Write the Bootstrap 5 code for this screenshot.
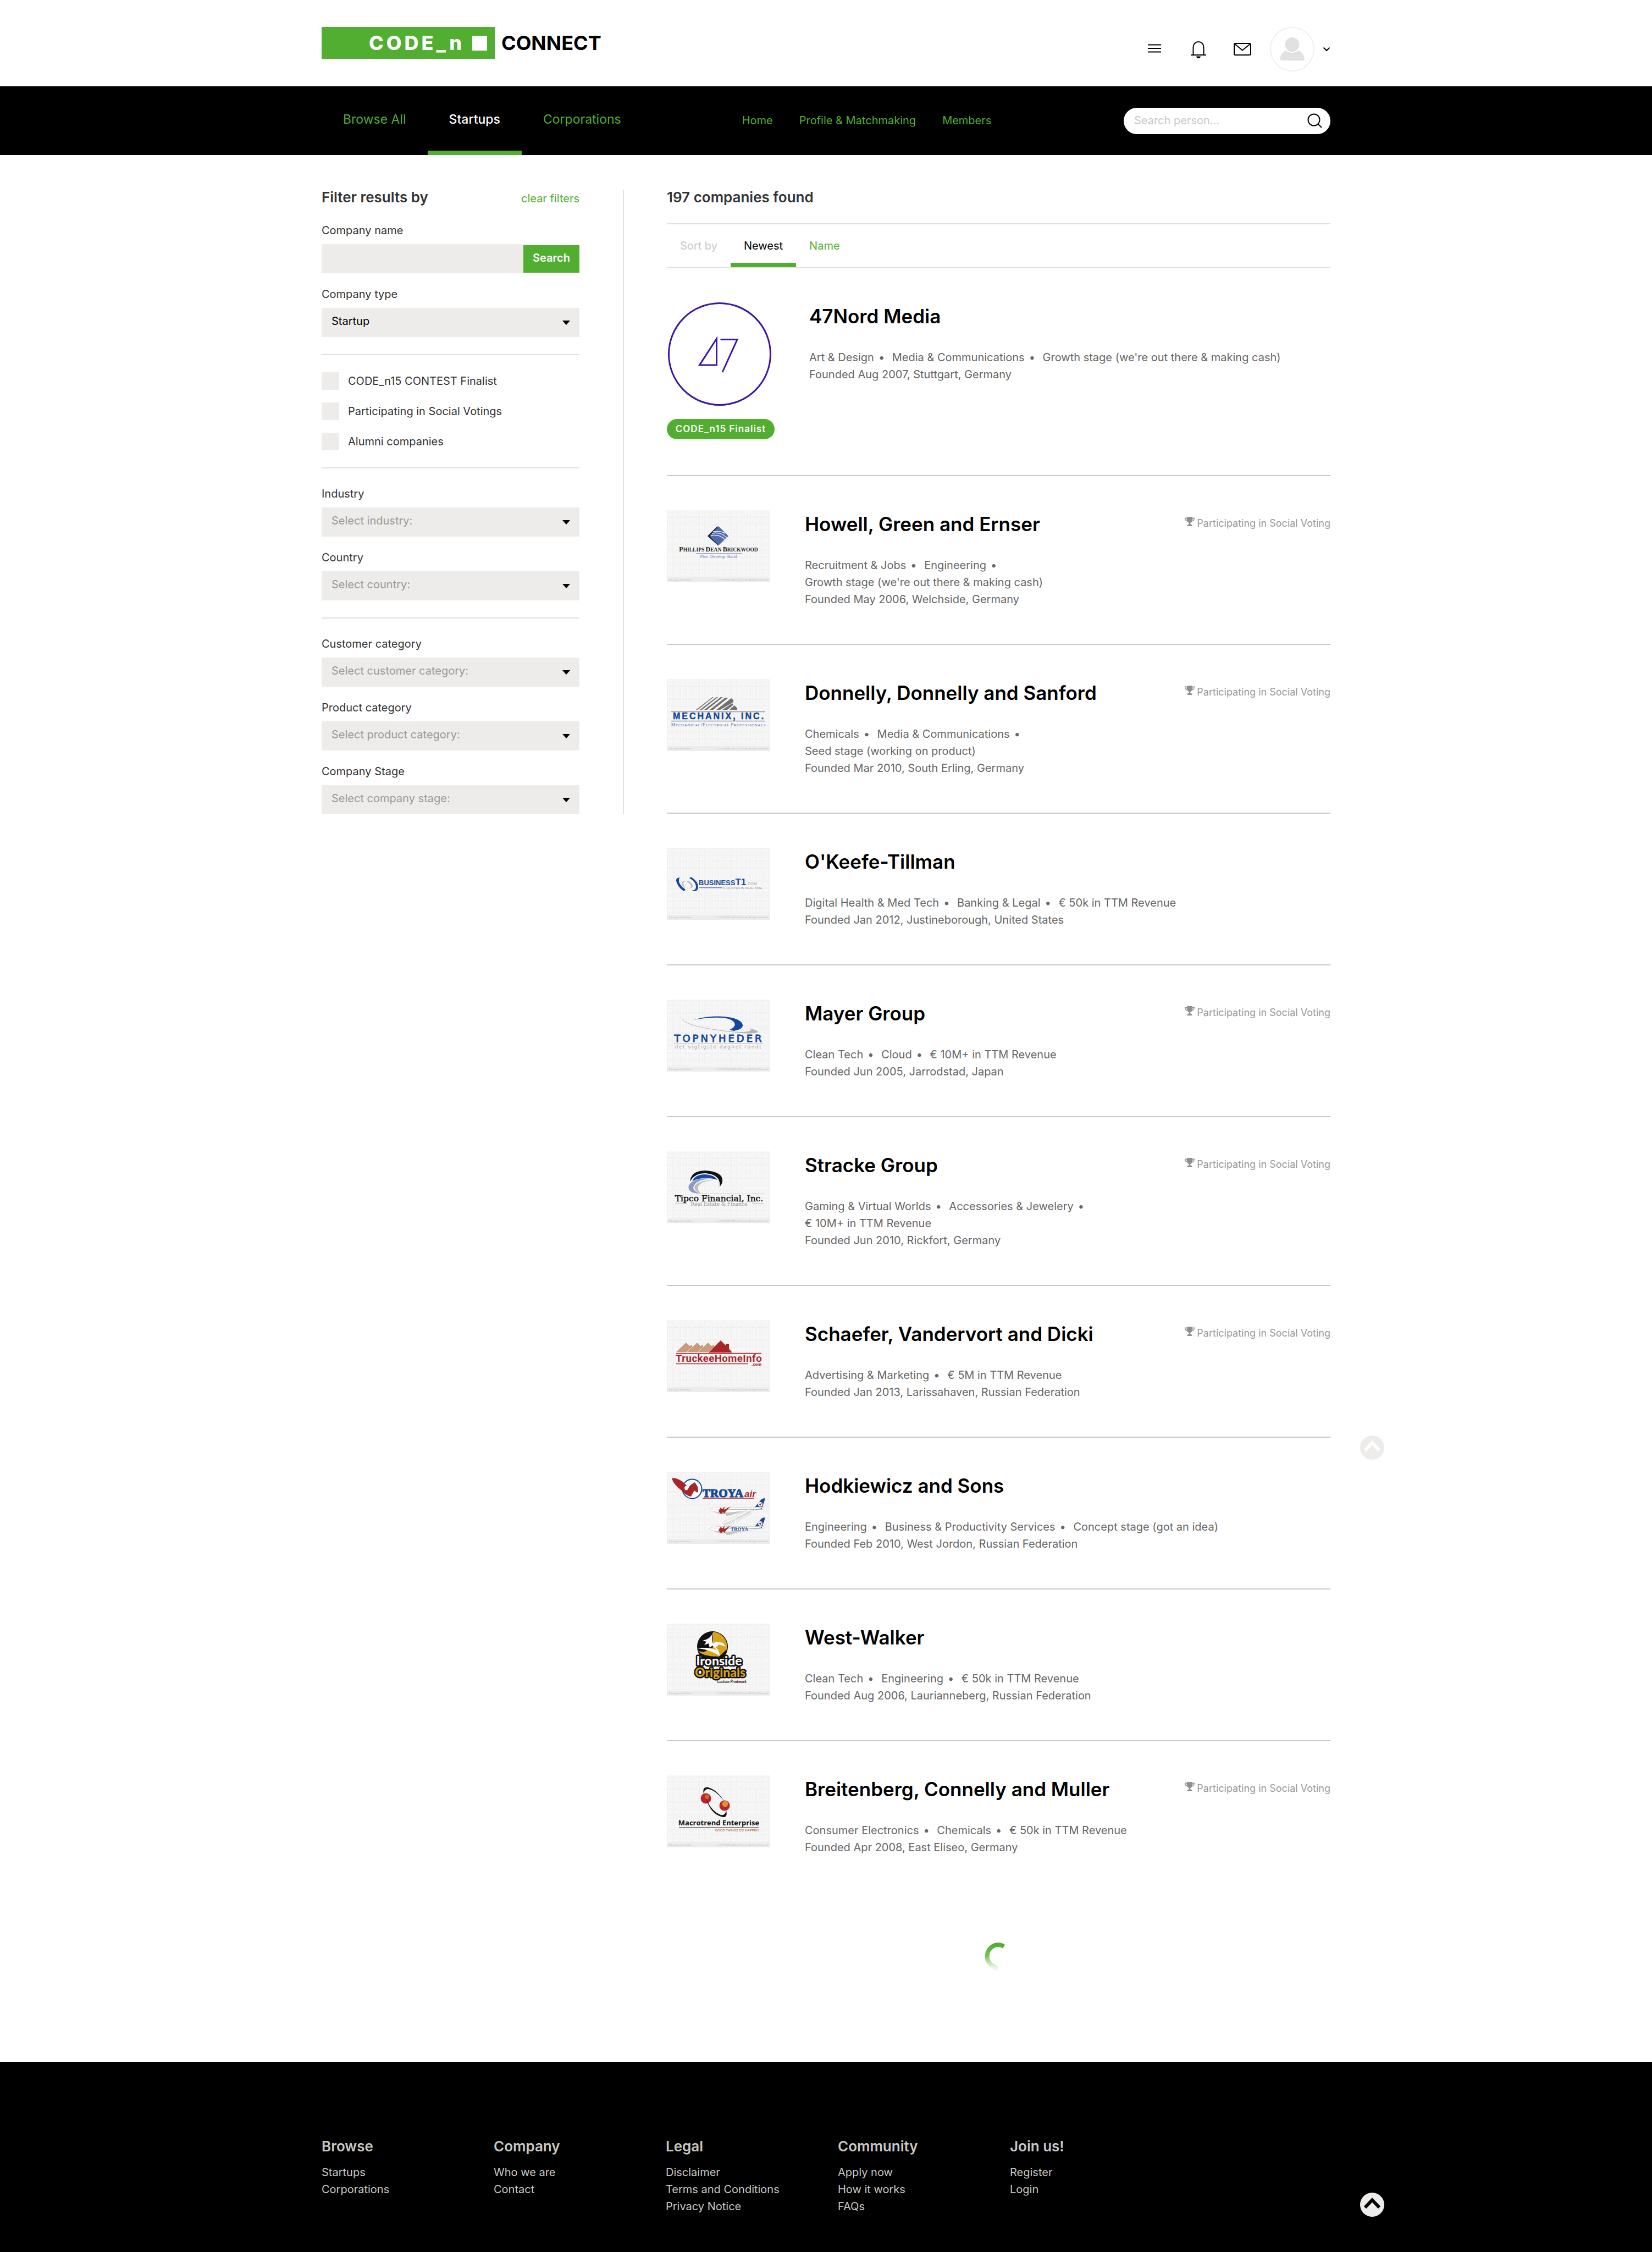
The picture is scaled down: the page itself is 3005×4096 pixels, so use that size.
<!DOCTYPE html>
<html lang="en">
<head>
<meta charset="utf-8">
<meta name="viewport" content="width=device-width, initial-scale=1">
<title>CODE_n CONNECT – Startups</title>
<link rel="stylesheet" href="https://cdn.jsdelivr.net/npm/bootstrap@5.3.0/dist/css/bootstrap.min.css">
<style>
:root{--brand:#52ae30;--ink:#333;--soft:#666;--field:#edecea;--rule:#e1e1e1}
body{font-family:Inter,"Liberation Sans",sans-serif;font-size:20px;line-height:31px;color:var(--ink);background:#fff}
a{color:var(--brand);text-decoration:none}
a:hover{text-decoration:underline}
.wrap{width:100%;max-width:1835px;margin-inline:auto}

/* header */
.topbar{padding:49px 0 27px}
.brand{gap:12px;color:#000;font-size:36px;font-weight:700;line-height:36px}
.brand:hover{text-decoration:none}
.brand-box{width:315px;height:58px;padding-right:14px;gap:14px;background:var(--brand);color:#fff}
.brand-code{font-weight:800;letter-spacing:5px}
.brand-square{width:27px;height:27px;background:#fff}
.tools{gap:48px}
.tools button,.user-menu{border:0;padding:0;background:none;line-height:0}
.user-menu{gap:15px;margin-left:-14px}

/* navigation */
.mainnav{height:125px;background:#000}
.mainnav .browse a{padding:4px 39px 0;font-size:23px;border-bottom:8px solid transparent}
.mainnav .browse a[aria-current]{color:#fff;border-color:var(--brand);font-weight:500}
.mainnav .site{gap:48px;margin-left:181px}
.people-search{width:376px;height:48px;padding:0 15px 0 19px;border-radius:24px;background:#fff}
.people-search input{border:0;outline:0;width:100%;min-width:0;padding:0;background:none}
.people-search input::placeholder{color:#c9c7c3}
.people-search button{border:0;padding:0;background:none;line-height:0}

/* filters */
.page-body{padding:63px 0 165px;gap:78px}
.filters{flex:0 0 550px;padding-right:79px;border-right:2px solid var(--rule)}
.filters-head{height:28px;margin-bottom:31px}
.filters-head a{line-height:28px}
.section-title{margin:0;font-size:26px;line-height:28px;font-weight:600}
.field-group{gap:23px}
.filters label{display:block}
.field-group label{margin-bottom:9px}
.filters .form-control,.filters .form-select{height:53px;border:0;border-radius:0;background-color:var(--field);font-size:20px}
.filters .form-select{padding:0 48px 5px 18px;color:#999;background-image:url("data:image/svg+xml,%3Csvg xmlns='http://www.w3.org/2000/svg' viewBox='0 0 14 8'%3E%3Cpath d='M0 0h14L7 8z'/%3E%3C/svg%3E");background-size:14px 8px;background-position:right 17px center}
.filters .form-select.chosen{color:#000}
.btn-search{width:102px;height:50px;padding:0 0 3px;border:0;background:var(--brand);color:#fff;font-size:20px;font-weight:600}
.filters hr{margin:31px 0;border:0;border-top:2px solid var(--rule);opacity:1}
.ticks{gap:23px}
.ticks input{appearance:none;width:32px;height:32px;margin:0;background:var(--field)}
.ticks input:checked{background:var(--brand)}

/* results */
.sortbar{height:82px;margin-top:33px;border:solid var(--rule);border-width:2px 0}
.sortbar>*{padding:0 24px;border-bottom:8px solid transparent;border-top:8px solid transparent}
.sortbar .hint{color:#c9c7c3}
.sortbar [aria-current]{color:#000;border-bottom-color:var(--brand)}
.company{gap:63px;padding:62px 0 65px;border-bottom:2px solid #c9c9c9}
.company:last-child{border-bottom:0}
.thumb{flex:none;width:188px}
.thumb svg{display:block;width:100%}
.finalist-logo{flex:none;width:196px}
.finalist-tag{margin-top:24px;height:37px;border-radius:19px;background:var(--brand);color:#fff;font-size:17px;font-weight:600;letter-spacing:1px;line-height:37px}
.company h2{margin:0 0 35px;font-size:35px;line-height:50px;font-weight:600}
.company h2 a{color:#000}
.facts{color:var(--soft)}
.facts span{white-space:nowrap}
.facts span:not(:last-child)::after{content:"•";margin:0 8px}
.voting{flex:none;padding-top:8px;gap:4px;font-size:18px;color:#999}
.loader{display:block;margin:92px auto 0}
.to-top{position:absolute;right:-98px;line-height:0}
.to-top.upper{bottom:1095px}

/* footer */
.site-footer{padding:134px 0 68px;background:#000;color:#c9c7c3}
.site-footer a{color:#c9c7c3}
.site-footer h3{margin:0 0 12px;font-size:26px;line-height:40px;font-weight:600}
.site-footer nav{flex:0 0 313px}
.site-footer .to-top{bottom:-3px}
@media (max-width:1400px){
  .wrap{padding-inline:24px}
  .page-body,.mainnav>.wrap,.site-footer .wrap{flex-wrap:wrap}
  .mainnav{height:auto}.filters{flex-basis:100%;border:0;padding:0}.to-top{right:24px}
}
</style>
</head>
<body class="d-flex flex-column min-vh-100">

<!-- shared drawings -->
<svg width="0" height="0" class="position-absolute" aria-hidden="true">
  <defs>
    <pattern id="tiles" width="11.6" height="12.1" patternUnits="userSpaceOnUse">
      <rect width="11.6" height="12.1" fill="#f7f7f7"/>
      <rect x="1.5" y="1.5" width="9" height="9.5" fill="#fafafa" stroke="#eeeeee"/>
      <path d="M4 4h4v2H4.500v2.500H8" fill="none" stroke="#f0f0f0"/>
    </pattern>
    <symbol id="sheet" viewBox="0 0 188 131">
      <rect width="188" height="131" fill="url(#tiles)"/>
      <rect y="122" width="188" height="9" fill="#ececec"/>
      <g font-family="Liberation Sans, sans-serif" font-size="4" fill="#bdbdbd">
        <text x="4" y="128">Biz-Logo.com Portfolio</text>
        <text x="185" y="128" text-anchor="end">© COPYRIGHT, BIZ-LOGO.com. All Rights Reserved.</text>
      </g>
    </symbol>
    <symbol id="cup" viewBox="0 0 18 17">
      <path d="M4.500 0h9v1.500H18c0 4-1.500 6.500-5 7.200-.8 1.200-1.800 1.900-2.800 2.200v2.600c1.800.2 3 1 3.300 2V17h-9v-1.500c.3-1 1.500-1.800 3.300-2v-2.600C6.800 10.600 5.800 9.900 5 8.700 1.500 8 0 5.500 0 1.500h4.500zM1.500 3c.2 2 1 3.500 2.700 4.100C3.700 6 3.500 4.500 3.500 3zm15 0h-2c0 1.500-.2 3-.7 4.100C15.500 6.500 16.300 5 16.500 3z" fill="#8f8f8f" fill-rule="evenodd"/>
    </symbol>
    <symbol id="plane" viewBox="0 0 104 32">
      <path d="M80 20 95 2q3-2 7-2l-6 19z" fill="#15489a"/>
      <circle cx="93" cy="11" r="4" fill="#fff"/><path d="m90 10 3 4 3-6-3 2z" fill="#a8252a"/>
      <path d="M1 20q8-4 22-3.500H80l20-.5-14 5q-14 4-36 5-30 2-44-2-6-1-5-4z" fill="#fff" stroke="#ccc" stroke-width=".8"/>
      <path d="M6 24q30 4 60-1l-20 6H20z" fill="#c8c8c8"/>
      <path d="M0 20.500h100l-16-1z" fill="#777"/>
      <path d="m17 23 4-6 3 3 4-5-1 6 12-6-9 9-2 4-3-3-3 4-3-3z" fill="#a8252a"/>
      <path d="m30 28 28-5-18 8-9 1z" fill="#c4c4c4"/>
    </symbol>
  </defs>
</svg>

<header class="topbar">
  <div class="wrap d-flex justify-content-between align-items-start">
    <a href="#" class="brand d-flex align-items-center">
      <span class="brand-box d-flex align-items-center justify-content-end">
        <span class="brand-code">CODE_n</span><span class="brand-square"></span>
      </span>
      <span>CONNECT</span>
    </a>
    <div class="tools d-flex align-items-center">
      <button type="button" aria-label="Menu"><svg width="32" height="32" viewBox="0 0 32 32" stroke="#000" stroke-width="2"><path d="M4 7.500h24M4 14h24M4 20.500h24"/></svg></button>
      <button type="button" aria-label="Notifications"><svg width="32" height="32" viewBox="0 0 32 32" fill="none" stroke="#000" stroke-width="2"><path d="M6.500 25V11.500a9.500 9.500 0 0 1 19 0V25M2 26h28"/><path d="M12 28.500h8q-1 4-4 4t-4-4z" fill="#000" stroke="none"/></svg></button>
      <button type="button" aria-label="Messages"><svg width="32" height="32" viewBox="0 0 32 32" fill="none" stroke="#000" stroke-width="2"><rect x="1" y="5" width="30" height="21" rx="2"/><path d="m2 6 14 11.500L30 6"/></svg></button>
      <button type="button" class="user-menu d-flex align-items-center" aria-label="Account">
        <svg width="81" height="81" viewBox="0 0 81 81"><circle cx="40.500" cy="40.500" r="39.500" fill="#fff" stroke="#efefef" stroke-width="2"/><ellipse cx="40.500" cy="32" rx="13" ry="13" fill="#e1e1e1"/><path d="M18 61q0-13 11-18 11 8 23 0 11 5 11 18z" fill="#e1e1e1"/></svg>
        <svg width="14" height="9" viewBox="0 0 14 9" fill="none" stroke="#000" stroke-width="2"><path d="m1.500 1.500 5.500 5.500 5.500-5.500"/></svg>
      </button>
    </div>
  </div>
</header>

<div class="mainnav">
  <div class="wrap d-flex h-100">
    <nav class="browse d-flex" aria-label="Browse">
      <a href="#" class="d-flex align-items-center">Browse All</a>
      <a href="#" class="d-flex align-items-center" aria-current="page">Startups</a>
      <a href="#" class="d-flex align-items-center">Corporations</a>
    </nav>
    <nav class="site d-flex align-items-center" aria-label="Site">
      <a href="#">Home</a><a href="#">Profile &amp; Matchmaking</a><a href="#">Members</a>
    </nav>
    <form class="people-search d-flex align-items-center ms-auto align-self-center">
      <input type="search" aria-label="Search person" placeholder="Search person...">
      <button type="button" aria-label="Search"><svg width="27" height="27" viewBox="0 0 27 27" fill="none" stroke="#000" stroke-width="2"><circle cx="12" cy="12" r="10.500"/><path d="m19.500 19.500 6.500 6.500"/></svg></button>
    </form>
  </div>
</div>

<main class="wrap page-body d-flex align-items-start position-relative">
  <form class="filters">
    <div class="filters-head d-flex justify-content-between align-items-baseline">
      <h1 class="section-title">Filter results by</h1>
      <a href="#">clear filters</a>
    </div>
    <div class="field-group d-flex flex-column">
      <div>
        <label for="cname">Company name</label>
        <div class="d-flex align-items-center">
          <input id="cname" type="text" class="form-control">
          <button type="button" class="btn-search flex-shrink-0">Search</button>
        </div>
      </div>
      <div>
        <label for="ctype">Company type</label>
        <select id="ctype" class="form-select chosen"><option>Startup</option></select>
      </div>
    </div>
    <hr>
    <div class="ticks d-flex flex-column">
      <div class="d-flex align-items-center gap-3"><input id="t1" type="checkbox"><label for="t1">CODE_n15 CONTEST Finalist</label></div>
      <div class="d-flex align-items-center gap-3"><input id="t2" type="checkbox"><label for="t2">Participating in Social Votings</label></div>
      <div class="d-flex align-items-center gap-3"><input id="t3" type="checkbox"><label for="t3">Alumni companies</label></div>
    </div>
    <hr>
    <div class="field-group d-flex flex-column">
      <div><label for="industry">Industry</label><select id="industry" class="form-select"><option>Select industry:</option></select></div>
      <div><label for="country">Country</label><select id="country" class="form-select"><option>Select country:</option></select></div>
    </div>
    <hr>
    <div class="field-group d-flex flex-column">
      <div><label for="customer">Customer category</label><select id="customer" class="form-select"><option>Select customer category:</option></select></div>
      <div><label for="product">Product category</label><select id="product" class="form-select"><option>Select product category:</option></select></div>
      <div><label for="stage">Company Stage</label><select id="stage" class="form-select"><option>Select company stage:</option></select></div>
    </div>
  </form>

  <section class="flex-grow-1">
    <h2 class="section-title">197 companies found</h2>
    <div class="sortbar d-flex">
      <span class="hint d-flex align-items-center">Sort by</span>
      <a href="#" class="d-flex align-items-center" aria-current="true">Newest</a>
      <a href="#" class="d-flex align-items-center">Name</a>
    </div>

    <div class="results">
      <article class="company d-flex">
        <div class="finalist-logo">
          <svg class="d-block" width="191" height="188" viewBox="0 0 191 188" fill="none" stroke="#3d15a3" stroke-width="3"><circle cx="96" cy="94" r="92.500"/><path d="M90.500 66v48H59.500zM97.500 67.500H128L101 127"/></svg>
          <div class="finalist-tag text-center">CODE_n15 Finalist</div>
        </div>
        <div>
          <h2><a href="#">47Nord Media</a></h2>
          <div class="facts"><span>Art &amp; Design</span> <span>Media &amp; Communications</span> <span>Growth stage (we're out there &amp; making cash)</span></div>
          <div class="facts">Founded Aug 2007, Stuttgart, Germany</div>
        </div>
      </article>

      <article class="company d-flex">
        <div class="thumb"><svg viewBox="0 0 188 131" role="img" aria-label="Phillips Dean Brickwood">
          <use href="#sheet"/>
          <path d="M92 29 74 47l19 17z" fill="#111"/><path d="m94 29 18 18-18 17-17-17z" fill="#5069ac"/>
          <path d="M82 42q16-3 27 8M80 46q16-3 26 8M84 39q14-2 22 3" fill="none" stroke="#dfe5f4" stroke-width="1.500"/>
          <g font-family="Liberation Serif, serif" text-anchor="middle"><text x="94" y="75" font-size="12" font-weight="700" fill="#222"><tspan>P</tspan><tspan font-size="9.500">HILLIPS </tspan><tspan>D</tspan><tspan font-size="9.500">EAN </tspan><tspan>B</tspan><tspan font-size="9.500">RICKWOOD</tspan></text>
          <text x="94" y="87" font-size="8" fill="#6c80bd">Plan&#160; Develop&#160; Build</text></g>
          <path d="M53 79h84" stroke="#8c9ccc" stroke-width="1.500"/>
        </svg></div>
        <div class="flex-grow-1">
          <h2><a href="#">Howell, Green and Ernser</a></h2>
          <div class="facts"><span>Recruitment &amp; Jobs</span> <span>Engineering</span> <span>Growth stage (we're out there &amp; making cash)</span></div>
          <div class="facts">Founded May 2006, Welchside, Germany</div>
        </div>
        <div class="voting d-flex"><svg class="mt-1" width="18" height="17"><use href="#cup"/></svg><span>Participating in Social Voting</span></div>
      </article>

      <article class="company d-flex">
        <div class="thumb"><svg viewBox="0 0 188 131" role="img" aria-label="Mechanix, Inc.">
          <use href="#sheet"/>
          <g fill="#707070"><path d="M53 56 83 33h2L56 56zM60 56 90 33h3L64 56zM68 56 98 33h4L73 56zM78 56l28-22h6L84 56zM90 56l27-21 4 3v4L97 56zM101 56l18-12 2 3-11 9zM114 56l9-8 5 5v3z"/></g>
          <path d="M8 59.500h171M8 76.500h171" stroke="#999" stroke-width="1.500"/>
          <text x="95" y="73" text-anchor="middle" font-family="Liberation Sans, sans-serif" font-size="16" font-weight="700" letter-spacing="3" fill="#15489a" stroke="#15489a" stroke-width=".5">MECHANIX, INC.</text>
          <text x="94" y="86" text-anchor="middle" font-family="Liberation Serif, serif" font-size="8.500" letter-spacing=".6" fill="#5069ac">M<tspan font-size="7">ECHANICAL</tspan>/E<tspan font-size="7">LECTRICAL </tspan>P<tspan font-size="7">ROFESSIONALS</tspan></text>
        </svg></div>
        <div class="flex-grow-1">
          <h2><a href="#">Donnelly, Donnelly and Sanford</a></h2>
          <div class="facts"><span>Chemicals</span> <span>Media &amp; Communications</span> <span>Seed stage (working on product)</span></div>
          <div class="facts">Founded Mar 2010, South Erling, Germany</div>
        </div>
        <div class="voting d-flex"><svg class="mt-1" width="18" height="17"><use href="#cup"/></svg><span>Participating in Social Voting</span></div>
      </article>

      <article class="company d-flex">
        <div class="thumb"><svg viewBox="0 0 188 131" role="img" aria-label="BusinessT1.com">
          <use href="#sheet"/>
          <path d="M25 54q-9 0-8 6 2 11 14 19l3-3q-13-9-12-18 0-3 3-4zM41 55q12 7 12 16 0 6-8 7 12 3 12-7 0-10-13-18z" fill="#15489a"/>
          <path d="M34 60q-7 0-7 5 1 6 8 9-5-5-5-9t4-5zM36 61q8 5 8 9 0 3-4 4 7 0 7-4 0-5-8-10z" fill="#bbb"/>
          <g font-family="Liberation Sans, sans-serif"><text x="58" y="68" font-size="13" font-weight="700" fill="#15489a">BUSINESS<tspan font-size="17">T1</tspan><tspan font-size="7" font-weight="400" fill="#999" dx="1">.COM</tspan></text>
          <text x="173" y="75" text-anchor="end" font-size="5.800" fill="#999">T1 QUOTES IN REAL-TIME</text></g>
          <path d="M59 72.500h41" stroke="#6482b8" stroke-width="1.500"/>
        </svg></div>
        <div class="flex-grow-1">
          <h2><a href="#">O'Keefe-Tillman</a></h2>
          <div class="facts"><span>Digital Health &amp; Med Tech</span> <span>Banking &amp; Legal</span> <span>€ 50k in TTM Revenue</span></div>
          <div class="facts">Founded Jan 2012, Justineborough, United States</div>
        </div>
      </article>

      <article class="company d-flex">
        <div class="thumb"><svg viewBox="0 0 188 131" role="img" aria-label="Topnyheder">
          <use href="#sheet"/>
          <path d="M48 37q28-8 56-6 31 3 34 15 1 8-16 11l-8-2q14-6 8-14-12-14-74-4z" fill="#15489a"/>
          <path d="M26 34q12 16 92 24 32 3 35-3-2-2-3-3 15 4 16 6-2 6-40 2Q34 51 26 34z" fill="#b5b5b5"/>
          <text x="95" y="77" text-anchor="middle" font-family="DejaVu Sans, sans-serif" font-size="18" letter-spacing="4" fill="#15489a" stroke="#15489a" stroke-width=".9">TOPNYHEDER</text>
          <path d="M13 80h162" stroke="#bbb"/>
          <text x="94" y="88.500" text-anchor="middle" font-family="DejaVu Sans, sans-serif" font-size="8.500" letter-spacing="1.800" fill="#a5a5a5">det vigtigste døgnet rundt</text>
        </svg></div>
        <div class="flex-grow-1">
          <h2><a href="#">Mayer Group</a></h2>
          <div class="facts"><span>Clean Tech</span> <span>Cloud</span> <span>€ 10M+ in TTM Revenue</span></div>
          <div class="facts">Founded Jun 2005, Jarrodstad, Japan</div>
        </div>
        <div class="voting d-flex"><svg class="mt-1" width="18" height="17"><use href="#cup"/></svg><span>Participating in Social Voting</span></div>
      </article>

      <article class="company d-flex">
        <div class="thumb"><svg viewBox="0 0 188 131" role="img" aria-label="Tipco Financial, Inc.">
          <use href="#sheet"/>
          <path d="M42 55q2-20 28-20 33 2 31 20-1 6-5 9 3-21-25-24-20-1-29 15z" fill="#111"/>
          <path d="M46 54q6-12 23-12 18 1 23 10-24-8-46 2z" fill="#15489a"/>
          <path d="M80 50Q50 46 40 62q-4 14 20 15-18-7-9-17 10-12 37-9z" fill="#8a9bcb"/>
          <path d="M84 53Q58 52 50 64q0 9 12 13-10-9-3-16 7-7 25-8z" fill="#bcbcbc"/>
          <path d="M60 77.500h117M15 95h22M155 95h22" stroke="#bbb"/>
          <g font-family="DejaVu Serif, serif" text-anchor="middle"><text x="95" y="91" font-size="15.500" fill="#111" stroke="#111" stroke-width=".5">Tipco Financial, Inc.</text>
          <text x="95" y="99" font-size="9" fill="#999">Real Estate &amp; Finance</text></g>
        </svg></div>
        <div class="flex-grow-1">
          <h2><a href="#">Stracke Group</a></h2>
          <div class="facts"><span>Gaming &amp; Virtual Worlds</span> <span>Accessories &amp; Jewelery</span> <span>€ 10M+ in TTM Revenue</span></div>
          <div class="facts">Founded Jun 2010, Rickfort, Germany</div>
        </div>
        <div class="voting d-flex"><svg class="mt-1" width="18" height="17"><use href="#cup"/></svg><span>Participating in Social Voting</span></div>
      </article>

      <article class="company d-flex">
        <div class="thumb"><svg viewBox="0 0 188 131" role="img" aria-label="TruckeeHomeInfo.com">
          <use href="#sheet"/>
          <path d="m17 58 18-17 6 6 5-2v4L36 58zM37 58l18-17 6 6 5-2v4L56 58zM57 58l18-17 6 6 5-2v4L76 58z" fill="#c99a7b"/>
          <path d="m76 59 22-22 9 9v-3h6v9l6 7z" fill="#a8252a"/>
          <path d="M17 60.500h155M17 79.500h131" stroke="#a8252a" stroke-width="1.500"/>
          <g font-family="Roboto, sans-serif" font-weight="700" fill="#a8252a"><text x="94.500" y="76" text-anchor="middle" font-size="18.500" letter-spacing=".5">TruckeeHomeInfo</text><text x="172" y="83" text-anchor="end" font-size="8">.com</text></g>
        </svg></div>
        <div class="flex-grow-1">
          <h2><a href="#">Schaefer, Vandervort and Dicki</a></h2>
          <div class="facts"><span>Advertising &amp; Marketing</span> <span>€ 5M in TTM Revenue</span></div>
          <div class="facts">Founded Jan 2013, Larissahaven, Russian Federation</div>
        </div>
        <div class="voting d-flex"><svg class="mt-1" width="18" height="17"><use href="#cup"/></svg><span>Participating in Social Voting</span></div>
      </article>

      <article class="company d-flex">
        <div class="thumb"><svg viewBox="0 0 188 131" role="img" aria-label="Troya air">
          <use href="#sheet"/>
          <circle cx="46" cy="31" r="17.500" fill="#fff" stroke="#15489a" stroke-width="2"/>
          <path d="M9 12q6-3 20 6l7 7q-6 2-3 8 4 2 6-3 3-6 7-8l5-3 5 8 1 8-2 3-5-4-4 7-2 4q-8-1-16-10Q12 23 9 12z" fill="#a8252a"/>
          <text x="65" y="46" font-family="Liberation Serif, serif" font-size="21" font-weight="700" fill="#15489a" stroke="#15489a" stroke-width="1.200">TROYA</text>
          <path d="M65 48h94" stroke="#a8252a" stroke-width="1.500"/>
          <text x="141" y="46" font-family="Liberation Sans, sans-serif" font-size="17" font-style="italic" font-weight="700" fill="#a8252a">air</text>
          <use href="#plane" x="77" y="48" width="104" height="32"/><use href="#plane" x="77" y="83" width="104" height="32"/>
          <text x="116" y="107" font-family="Liberation Serif, serif" font-size="9" font-weight="700" fill="#15489a">TROYA</text>
          <g transform="rotate(-27 128 84)"><rect x="101" y="79" width="54" height="10" fill="#f4f4f4" fill-opacity=".6" stroke="#ccc" stroke-width=".6"/><text x="128" y="86.500" text-anchor="middle" font-family="Liberation Sans, sans-serif" font-size="6" fill="#aaa">Click to zoom more</text></g>
        </svg></div>
        <div class="flex-grow-1">
          <h2><a href="#">Hodkiewicz and Sons</a></h2>
          <div class="facts"><span>Engineering</span> <span>Business &amp; Productivity Services</span> <span>Concept stage (got an idea)</span></div>
          <div class="facts">Founded Feb 2010, West Jordon, Russian Federation</div>
        </div>
      </article>

      <article class="company d-flex">
        <div class="thumb"><svg viewBox="0 0 188 131" role="img" aria-label="Ironside Originals">
          <use href="#sheet"/>
          <circle cx="83" cy="42" r="28" fill="#111"/><path d="M84 15a27 27 0 0 1 25 32l-14 13q-30 0-38-10l10 2 17-9z" fill="#d9a21b"/>
          <path d="M84 16q-4 12-19 15l7 2-4 6 8-3 2 8 5-4 9 9q-16-7-36-4 22 2 40 14 0-10-7-16l6-5 12 4-5-7-14-2-4 4q-3-10 0-21z" fill="#fff"/>
          <g font-family="Lato, sans-serif" font-weight="900" text-anchor="middle" paint-order="stroke" stroke="#111" stroke-linejoin="round"><text x="95" y="76" font-size="23" fill="#fff" stroke-width="5">Ironside</text><text x="97" y="97" font-size="23" fill="#d9a21b" stroke-width="5">Originals</text></g>
          <text x="118" y="108" text-anchor="middle" font-family="Lato, sans-serif" font-size="7" font-weight="700" font-style="italic" fill="#111">Custom Printwork</text>
        </svg></div>
        <div class="flex-grow-1">
          <h2><a href="#">West-Walker</a></h2>
          <div class="facts"><span>Clean Tech</span> <span>Engineering</span> <span>€ 50k in TTM Revenue</span></div>
          <div class="facts">Founded Aug 2006, Laurianneberg, Russian Federation</div>
        </div>
      </article>

      <article class="company d-flex">
        <div class="thumb"><svg viewBox="0 0 188 131" role="img" aria-label="Macrotrend Enterprise">
          <use href="#sheet"/>
          <circle cx="71" cy="42" r="9.500" fill="#b8242a"/><circle cx="105" cy="55" r="9.500" fill="#b8242a"/><circle cx="106" cy="52" r="5.500" fill="#e2912a"/><circle cx="73" cy="39" r="4" fill="#d9622a"/>
          <path d="M67 34q-3-14 8-12 16 4 30 26Q90 28 76 25q-8-1-9 9zM72 44q10 22 26 28 8 2 10-8 3 13-6 12-22-5-30-32z" fill="#111"/>
          <text x="94.500" y="91" text-anchor="middle" font-family="Open Sans, sans-serif" font-size="13" font-weight="700" fill="#111">Macrotrend Enterprise</text>
          <path d="M22 94.500h145" stroke="#444"/>
          <text x="167" y="102" text-anchor="end" font-family="Liberation Sans, sans-serif" font-size="6" fill="#b5562f">GOOD THINGS DO HAPPEN</text>
        </svg></div>
        <div class="flex-grow-1">
          <h2><a href="#">Breitenberg, Connelly and Muller</a></h2>
          <div class="facts"><span>Consumer Electronics</span> <span>Chemicals</span> <span>€ 50k in TTM Revenue</span></div>
          <div class="facts">Founded Apr 2008, East Eliseo, Germany</div>
        </div>
        <div class="voting d-flex"><svg class="mt-1" width="18" height="17"><use href="#cup"/></svg><span>Participating in Social Voting</span></div>
      </article>
    </div>

    <svg class="loader" width="52" height="52" viewBox="0 0 52 52" role="img" aria-label="Loading" fill="none">
      <defs><linearGradient id="fade" x1="0" y1="0" x2="0" y2="1"><stop offset="0" stop-color="#52ae30"/><stop offset=".5" stop-color="#7cc463"/><stop offset="1" stop-color="#d8ecd1" stop-opacity=".5"/></linearGradient></defs>
      <path d="M35 7.500A20 21.500 0 0 0 4.500 26Q5 40 23 47" stroke="url(#fade)" stroke-width="8"/>
    </svg>
  </section>

  <a href="#" class="to-top upper" aria-label="Back to top"><svg width="44" height="44" viewBox="0 0 44 44"><circle cx="22" cy="22" r="22" fill="#edecea"/><path d="M9 27 22 13.500 35 27" fill="none" stroke="#fff" stroke-width="6"/></svg></a>
</main>

<footer class="site-footer flex-grow-1">
  <div class="wrap d-flex position-relative">
    <nav><h3>Browse</h3><a class="d-block" href="#">Startups</a><a class="d-block" href="#">Corporations</a></nav>
    <nav><h3>Company</h3><a class="d-block" href="#">Who we are</a><a class="d-block" href="#">Contact</a></nav>
    <nav><h3>Legal</h3><a class="d-block" href="#">Disclaimer</a><a class="d-block" href="#">Terms and Conditions</a><a class="d-block" href="#">Privacy Notice</a></nav>
    <nav><h3>Community</h3><a class="d-block" href="#">Apply now</a><a class="d-block" href="#">How it works</a><a class="d-block" href="#">FAQs</a></nav>
    <nav><h3>Join us!</h3><a class="d-block" href="#">Register</a><a class="d-block" href="#">Login</a></nav>
    <a href="#" class="to-top" aria-label="Back to top"><svg width="44" height="44" viewBox="0 0 44 44"><circle cx="22" cy="22" r="22" fill="#edecea"/><path d="M9 27 22 13.500 35 27" fill="none" stroke="#000" stroke-width="6"/></svg></a>
  </div>
</footer>

<script src="https://cdn.jsdelivr.net/npm/bootstrap@5.3.0/dist/js/bootstrap.bundle.min.js"></script>
</body>
</html>
